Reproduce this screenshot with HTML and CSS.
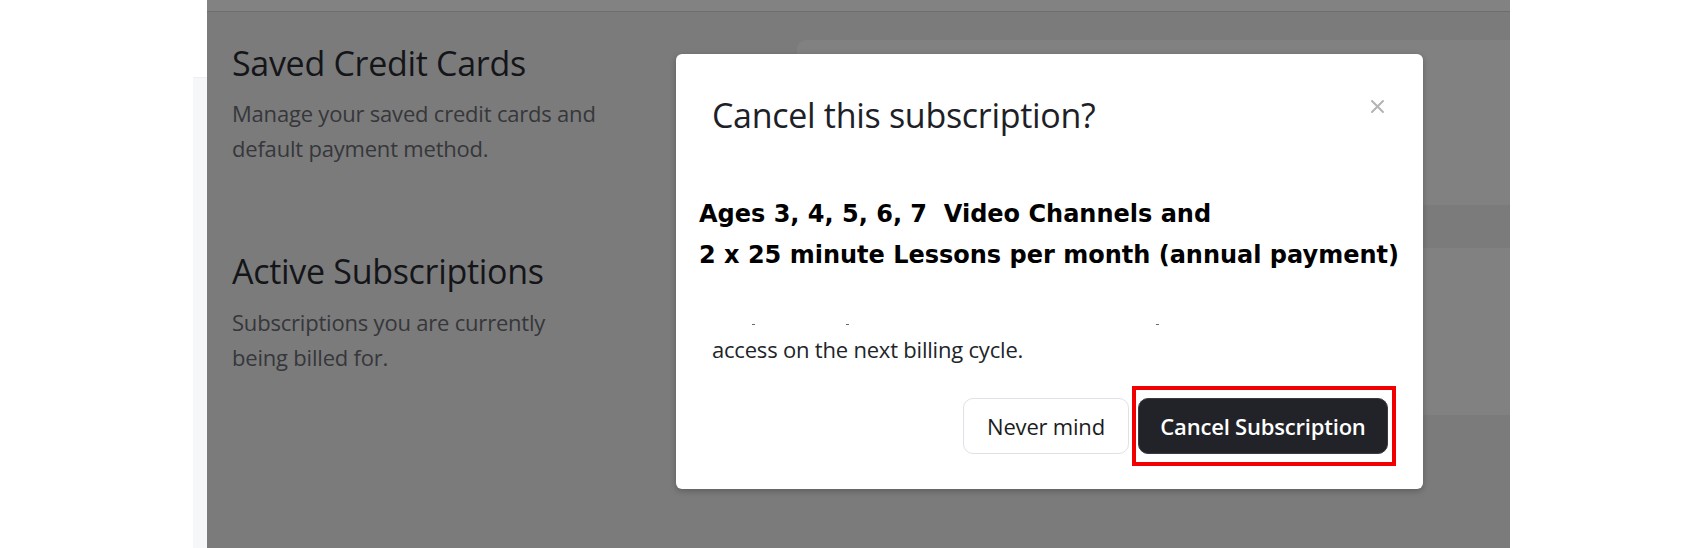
FILE: index.html
```html
<!DOCTYPE html>
<html lang="en">
<head>
<meta charset="utf-8">
<title>Cancel subscription</title>
<link rel="stylesheet" href="styles.css">
</head>
<body>
<div class="page">
  <div class="gutter"><div class="strip"></div></div>
  <div class="screen">
    <div class="topbar"></div>
    <div class="content">
      <div class="col-left">
        <section class="sec sec-cards">
          <h2 class="sec-title">Saved Credit Cards</h2>
          <p class="sec-desc">Manage your saved credit cards and<br>default payment method.</p>
        </section>
        <section class="sec sec-subs">
          <h2 class="sec-title">Active Subscriptions</h2>
          <p class="sec-desc">Subscriptions you are currently<br>being billed for.</p>
        </section>
      </div>
      <div class="col-right">
        <div class="card card-1"></div>
        <div class="card card-2"></div>
      </div>
    </div>
    <div class="modal">
      <div class="modal-header">
        <h3 class="modal-title">Cancel this subscription?</h3>
        <svg class="modal-close" width="15" height="15" viewBox="0 0 15 15" aria-label="Close">
          <path d="M2 2 L13 13 M13 2 L2 13" stroke="#b3b3b3" stroke-width="2" stroke-linecap="round" fill="none"/>
        </svg>
      </div>
      <div class="plan">
        <div class="plan-line">Ages 3, 4, 5, 6, 7&nbsp; Video Channels and</div>
        <div class="plan-line">2 x 25 minute Lessons per month (annual payment)</div>
      </div>
      <div class="clipped">
        <span class="tick t1"></span><span class="tick t2"></span><span class="tick t3"></span>
      </div>
      <p class="modal-text">access on the next billing cycle.</p>
      <div class="modal-footer">
        <button class="btn btn-light">Never mind</button>
        <div class="highlight">
          <button class="btn btn-dark">Cancel Subscription</button>
        </div>
      </div>
    </div>
  </div>
</div>
</body>
</html>
```

FILE: styles.css
```css
* { box-sizing: border-box; }
html, body { margin: 0; padding: 0; background: #ffffff; }
body { font-family: "Open Sans", "Noto Sans", sans-serif; }

.page {
  display: flex;
  height: 548px;
  overflow: hidden;
}

.gutter {
  width: 207px;
  flex: none;
  display: flex;
  justify-content: flex-end;
}
.strip {
  width: 14px;
  margin-top: 77px;
  background: #f6f7f9;
  border-top: 1px solid #eeeff2;
}

.screen {
  position: relative;
  width: 1303px;
  flex: none;
  background: #7b7b7c;
  overflow: hidden;
}

.topbar {
  height: 12px;
  background: #828283;
  border-bottom: 1px solid #6e6e6f;
}

.content {
  display: flex;
}

.col-left {
  width: 590px;
  flex: none;
  padding-left: 25px;
}

.sec-title {
  margin: 0;
  font-size: 34px;
  line-height: 40px;
  font-weight: 500;
  color: #141518;
  letter-spacing: -0.3px;
}
.sec-desc {
  margin: 0;
  font-size: 22px;
  line-height: 35px;
  color: #36373a;
  letter-spacing: -0.2px;
}
.sec-cards { margin-top: 31px; }
.sec-cards .sec-desc { margin-top: 13px; }
.sec-subs { margin-top: 85px; }
.sec-subs .sec-desc { margin-top: 14px; }

.col-right {
  flex: 1;
  margin-right: -40px;
}
.card {
  background: #818182;
  border-radius: 9px;
}
.card-1 { margin-top: 28px; height: 165px; }
.card-2 { margin-top: 43px; height: 167px; }

/* modal */
.modal {
  position: absolute;
  left: 469px;
  top: 54px;
  width: 747px;
  height: 435px;
  background: #ffffff;
  border-radius: 6px;
  box-shadow: 0 2px 6px rgba(0, 0, 0, 0.25);
  display: flex;
  flex-direction: column;
}

.modal-header {
  display: flex;
  justify-content: space-between;
  align-items: flex-start;
  margin-top: 41px;
  padding: 0 38px 0 36px;
}
.modal-title {
  margin: 0;
  font-size: 34px;
  line-height: 40px;
  font-weight: 500;
  color: #1d2127;
  letter-spacing: -0.3px;
}
.modal-close {
  display: block;
  flex: none;
  margin-top: 4px;
}

.plan {
  margin-top: 59px;
  padding-left: 23px;
  font-family: "DejaVu Sans", sans-serif;
  font-weight: bold;
  font-size: 24px;
  line-height: 41px;
  color: #000000;
}

.clipped {
  display: flex;
  height: 2px;
  margin-top: 48px;
}
.tick {
  height: 1px;
  width: 3px;
  background: #6a6a6a;
}
.t1 { margin-left: 76px; }
.t2 { margin-left: 91px; }
.t3 { margin-left: 307px; }

.modal-text {
  margin: 8px 0 0;
  padding-left: 36px;
  font-size: 22px;
  line-height: 30px;
  color: #212529;
  letter-spacing: -0.2px;
}

.modal-footer {
  margin-top: 22px;
  padding-right: 27px;
  display: flex;
  justify-content: flex-end;
  align-items: center;
}

.btn {
  font-family: "Open Sans", "Noto Sans", sans-serif;
  font-size: 22px;
  height: 56px;
  padding: 0 20px;
  border-radius: 10px;
  cursor: pointer;
  letter-spacing: -0.2px;
  white-space: nowrap;
}
.btn-light {
  width: 166px;
  background: #ffffff;
  color: #1a1d21;
  border: 1px solid #dee2e6;
  font-weight: 500;
}
.highlight {
  margin-left: 3px;
  border: 4px solid #f00000;
  padding: 8px 4px 8px 2px;
}
.btn-dark {
  display: block;
  width: 250px;
  background: #212328;
  color: #ffffff;
  border: 1px solid #3a3c40;
  font-weight: 600;
}
```
